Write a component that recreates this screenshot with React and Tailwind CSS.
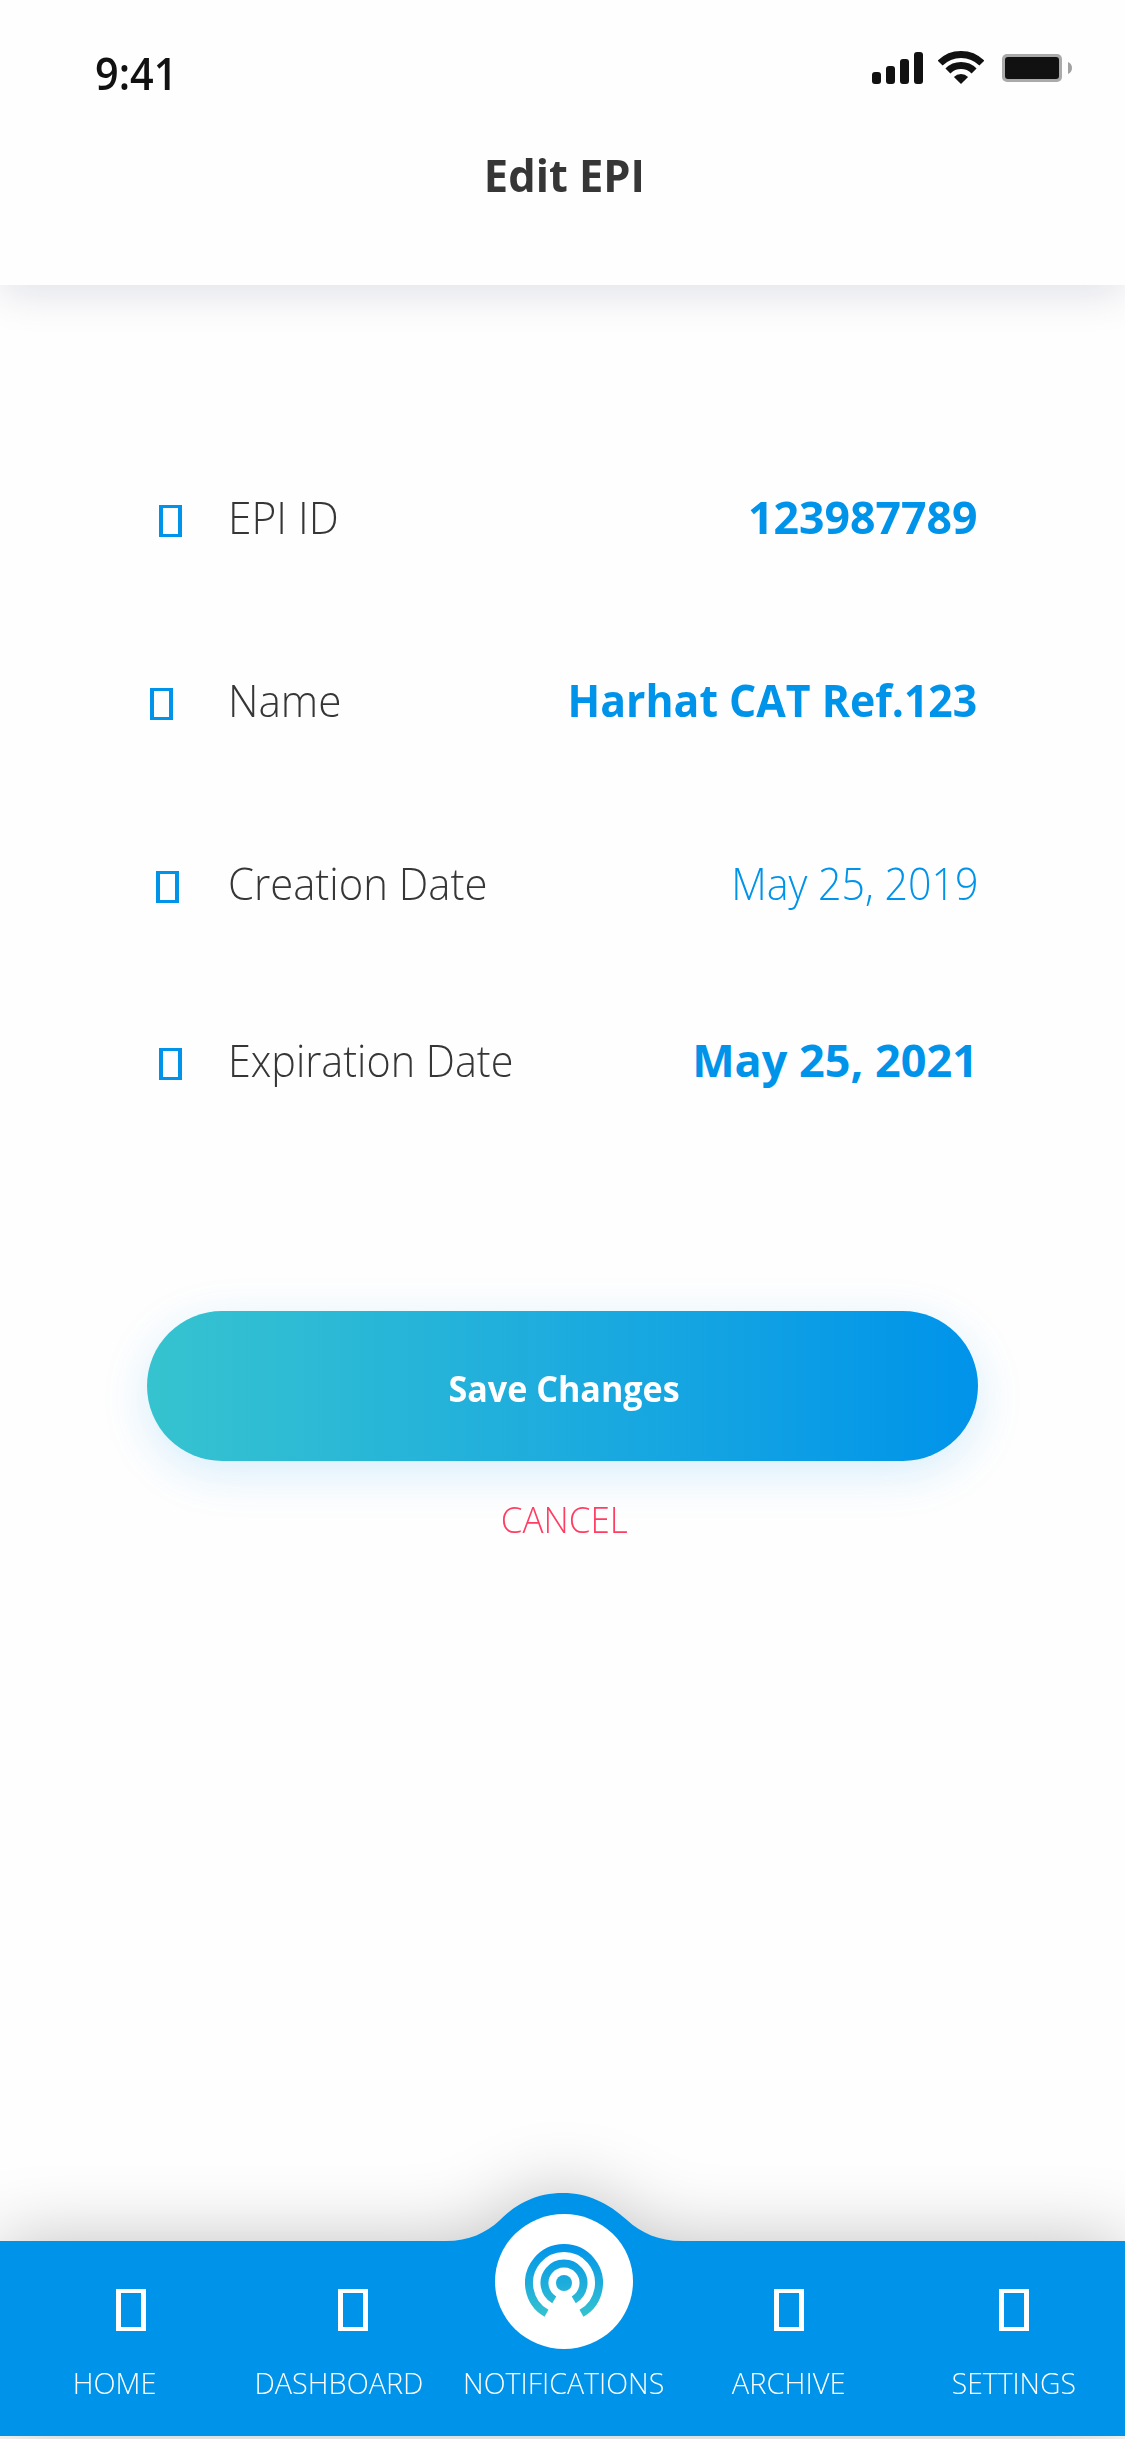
import React from "react";

const fields = [
  { label: "EPI ID", value: "123987789", icon: "ml-[12px]", row: "", labelCls: "scale-x-[0.944]", valueCls: "font-bold scale-x-[0.991] -mr-px" },
  { label: "Name", value: "Harhat CAT Ref.123", icon: "ml-[3px]", row: "mt-[123px]", labelCls: "scale-x-[0.939]", valueCls: "font-bold scale-x-[0.950]" },
  { label: "Creation Date", value: "May 25, 2019", icon: "ml-[9px]", row: "mt-[123px]", labelCls: "scale-x-[0.929]", valueCls: "font-light scale-x-[0.914] -mr-[2px]" },
  { label: "Expiration Date", value: "May 25, 2021", icon: "ml-[12px]", row: "mt-[117px]", labelCls: "scale-x-[0.918]", valueCls: "font-bold -mr-px" },
];

const tabs = [
  { label: "HOME", icon: "left-[17px]", text: "scale-x-[0.962]" },
  { label: "DASHBOARD", icon: "left-[14px]", text: "scale-x-[0.961]" },
  { label: "NOTIFICATIONS", text: "scale-x-[0.952]", center: true },
  { label: "ARCHIVE", icon: "", text: "scale-x-[0.969]" },
  { label: "SETTINGS", icon: "", text: "scale-x-[0.943]" },
];

function StatusIcons() {
  return (
    <div className="flex items-start">
      <div className="flex items-end gap-[5px] h-[32px] mt-[9px]">
        <span className="w-[9px] h-[12px] rounded-[3px] bg-[#111]" />
        <span className="w-[9px] h-[18px] rounded-[3px] bg-[#111]" />
        <span className="w-[9px] h-[25px] rounded-[3px] bg-[#111]" />
        <span className="w-[9px] h-[32px] rounded-[3px] bg-[#111]" />
      </div>
      <svg className="ml-[15px] mt-[8px]" width="46" height="33" viewBox="0 0 46 33" fill="none">
        <path d="M2.14 12.14A29.5 29.5 0 0 1 43.86 12.14" stroke="#111" strokeWidth="7" />
        <path d="M9.92 19.92A18.5 18.5 0 0 1 36.08 19.92" stroke="#111" strokeWidth="7" />
        <path d="M23 33L15.9 25.9A10 10 0 0 1 30.1 25.9Z" fill="#111" />
      </svg>
      <div className="ml-[18px] mt-[11px] w-[60px] h-[28px] rounded-[5px] bg-[#aaaaaa] p-[3px]">
        <div className="h-full w-full rounded-[3px] bg-[#111]" />
      </div>
      <svg className="ml-[6px] mt-[19px]" width="4" height="12" viewBox="0 0 4 12">
        <path d="M0 0C2.5 1 4 3.3 4 6S2.5 11 0 12Z" fill="#a2a2a2" />
      </svg>
    </div>
  );
}

function Radiate() {
  return (
    <svg width="78" height="73" viewBox="-39 -39 78 73" fill="none">
      <defs>
        <linearGradient id="radiate" gradientUnits="userSpaceOnUse" x1="0" y1="-39" x2="0" y2="34">
          <stop offset="0" stopColor="#0093ea" />
          <stop offset="1" stopColor="#36c3cf" />
        </linearGradient>
      </defs>
      <path d="M-17.5 30.31A35 35 0 1 1 17.5 30.31" stroke="url(#radiate)" strokeWidth="8" />
      <path d="M-9.75 16.89A19.5 19.5 0 1 1 9.75 16.89" stroke="url(#radiate)" strokeWidth="8" />
      <circle r="8" fill="url(#radiate)" />
    </svg>
  );
}

export default function App() {
  return (
    <div className="w-[1125px] h-[2439px] flex flex-col bg-[#fefefe] overflow-hidden font-['Open_Sans',sans-serif]">
      <header className="h-[285px] shrink-0 bg-[#fefefe] shadow-[0_9px_40px_rgba(0,14,74,0.12)]">
        <div className="flex justify-between items-start pl-[95px] pr-[53px] pt-[43px]">
          <span className="origin-left scale-x-[0.92] text-[45px] leading-[60px] font-semibold text-[#111]">9:41</span>
          <StatusIcons />
        </div>
        <h1 className="mt-[42px] text-center scale-x-[0.965] text-[45px] leading-[60px] font-bold text-[#363636] pl-[4px]">Edit EPI</h1>
      </header>

      <main className="flex flex-col px-[147px] pt-[202px]">
        {fields.map((f) => (
          <div key={f.label} className={`flex mr-px text-[45px] leading-[60px] whitespace-nowrap ${f.row}`}>
            <div className="w-[81px] shrink-0 pt-[18px]">
              <div className={`w-[23px] h-[32px] border-x-4 border-y-[3px] border-[#0093ea] ${f.icon}`} />
            </div>
            <span className={`origin-left font-light text-[#363636] ${f.labelCls}`}>{f.label}</span>
            <span className={`origin-right ml-auto text-[#0093ea] ${f.valueCls}`}>{f.value}</span>
          </div>
        ))}
        <button className="mt-[221px] h-[150px] w-[831px] rounded-[75px] bg-linear-to-r from-[#36c3cf] to-[#0093ea] shadow-[0_12px_48px_rgba(0,147,234,0.16)] text-white text-[36px] leading-[48px] font-bold pt-[5px] pl-[3px]">
          <span className="inline-block scale-x-[0.947]">Save Changes</span>
        </button>
        <button className="mt-[35px] self-center text-[36px] leading-[48px] font-light scale-x-[0.972] text-[#ff3d62] pl-[3px]">CANCEL</button>
      </main>

      <nav className="relative mt-auto h-[198px] shrink-0 text-white">
        <svg className="absolute left-0 top-0 overflow-visible drop-shadow-[0_0_36px_rgba(0,0,0,0.24)]" width="1125" height="195" viewBox="0 0 1125 195">
          <path d="M0 0H446C469 0 486 -8 500 -21C517 -38 537 -48 563 -48C588 -48 608 -38 627 -21C641 -8 659 0 682 0H1125V195H0Z" fill="#0093ea" />
        </svg>
        <div className="relative grid grid-cols-5 left-[1.5px] w-[1125px]">
          {tabs.map((t) => (
            <div key={t.label} className="relative flex flex-col items-center h-[195px] pt-[121px]">
              {t.center ? (
                <div className="absolute -top-[27px] w-[138px] h-[135px] rounded-[50%] bg-white flex justify-center pt-[30px]">
                  <Radiate />
                </div>
              ) : (
                <div className="absolute top-[48px] w-full flex justify-center">
                  <div className={`relative w-[30px] h-[42px] border-x-[5px] border-y-[4px] border-white ${t.icon}`} />
                </div>
              )}
              <span className={`text-[30px] leading-[42px] font-light whitespace-nowrap ${t.text}`}>{t.label}</span>
            </div>
          ))}
        </div>
      </nav>
    </div>
  );
}
